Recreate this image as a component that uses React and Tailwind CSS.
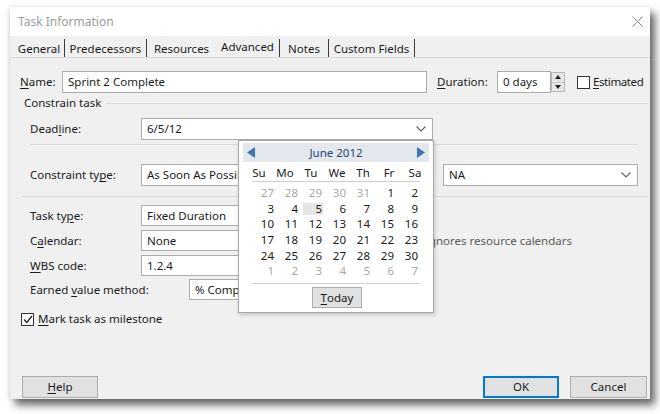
import React from "react";

const U = ({ children }) => <span className="underline underline-offset-[2px] decoration-[1px]">{children}</span>;

function Chevron() {
  return (
    <svg width="10" height="6" viewBox="0 0 10 6">
      <path d="M0.5 0.5 L5 5 L9.5 0.5" fill="none" stroke="#606060" strokeWidth="1.1" />
    </svg>
  );
}

function Field({ w, children, chevron }) {
  return (
    <div className={`${w} h-full bg-white border border-[#acacac] flex items-center justify-between pl-[5px] pr-[6px] overflow-hidden whitespace-nowrap`}>
      <span>{children}</span>
      {chevron ? <Chevron /> : null}
    </div>
  );
}

const weeks = [
  [["27", 0], ["28", 0], ["29", 0], ["30", 0], ["31", 0], ["1", 1], ["2", 1]],
  [["3", 1], ["4", 1], ["5", 2], ["6", 1], ["7", 1], ["8", 1], ["9", 1]],
  [["10", 1], ["11", 1], ["12", 1], ["13", 1], ["14", 1], ["15", 1], ["16", 1]],
  [["17", 1], ["18", 1], ["19", 1], ["20", 1], ["21", 1], ["22", 1], ["23", 1]],
  [["24", 1], ["25", 1], ["26", 1], ["27", 1], ["28", 1], ["29", 1], ["30", 1]],
  [["1", 0], ["2", 0], ["3", 0], ["4", 0], ["5", 0], ["6", 0], ["7", 0]],
];

function DayCell({ d, k }) {
  if (k === 0) return <div className="h-[15.7px] leading-[15.7px] text-right pr-[1px] text-[#a8a8a8]">{d}</div>;
  if (k === 2)
    return (
      <div className="h-[15.7px] flex justify-end">
        <div className="ml-[3px] w-[20px] h-[12px] mt-[2px] bg-[#e6e6e6] leading-[12px] text-right pr-[1px] text-[#1b1b1b]">{d}</div>
      </div>
    );
  return <div className="h-[15.7px] leading-[15.7px] text-right pr-[1px] text-[#1b1b1b]">{d}</div>;
}

function CalendarPopup() {
  return (
    <div className="absolute left-[228px] top-[133px] w-[196px] h-[173px] bg-white border border-[#a8a8a8] shadow-[1px_2px_4px_rgba(0,0,0,0.18)] flex flex-col">
      <div className="ml-[4px] mt-[2px] w-[186px] h-[19px] bg-[#e3e8ef] flex items-center justify-between px-[4px]">
        <svg width="8" height="11" viewBox="0 0 8 11">
          <path d="M8 0 L0 5.5 L8 11 Z" fill="#3a78b5" />
        </svg>
        <span className="text-[#27466e] text-[11.5px]">June 2012</span>
        <svg width="8" height="11" viewBox="0 0 8 11">
          <path d="M0 0 L8 5.5 L0 11 Z" fill="#3a78b5" />
        </svg>
      </div>
      <div className="ml-[7px] mt-[3px] grid grid-cols-[repeat(7,26px)] h-[15px] leading-[15px] text-[#1b1b1b]">
        <div className="text-center">Su</div>
        <div className="text-center">Mo</div>
        <div className="text-center">Tu</div>
        <div className="text-center">We</div>
        <div className="text-center">Th</div>
        <div className="text-center">Fr</div>
        <div className="text-center">Sa</div>
      </div>
      <div className="ml-[13px] mt-[1px] w-[168px] h-px bg-[#cfcfcf]" />
      <div className="ml-[12px] mt-[3px] grid grid-cols-[repeat(7,24px)]">
        {weeks.map((w, i) =>
          w.map(([d, k], j) => <DayCell key={i + "-" + j} d={d} k={k} />)
        )}
      </div>
      <div className="ml-[13px] mt-[4px] w-[168px] h-px bg-[#cfcfcf]" />
      <div className="mt-[3px] self-center w-[50px] h-[21px] bg-[#e1e1e1] border border-[#adadad] flex items-center justify-center ml-[2px]">
        <U>T</U>oday
      </div>
    </div>
  );
}

function Tab({ w, children, sel, sep }) {
  return (
    <>
      <div className={`${w} h-full flex items-end justify-center ${sel ? "pb-[2px]" : "pb-0"}`}>
        <span className="leading-[16px]">{children}</span>
      </div>
      {sep ? <div className="w-[1px] h-[18px] self-end bg-[#3a3a3a]" /> : null}
    </>
  );
}

export default function App() {
  return (
    <div className="w-[660px] h-[414px] bg-white overflow-hidden pl-[10px] pt-[7px] font-['Noto_Sans',sans-serif] text-[11.5px] text-[#1b1b1b]">
      <div className="relative w-[640px] h-[392px] bg-[#f0f0f0] flex flex-col shadow-[5px_6px_8px_rgba(0,0,0,0.6),-1px_0_4px_rgba(0,0,0,0.12)]">
        <div className="h-[29px] shrink-0 bg-white flex items-center justify-between pl-[8px] pr-[7px]">
          <span className="text-[12px] text-[#9c9c9c]">Task Information</span>
          <svg width="11" height="11" viewBox="0 0 11 11">
            <path d="M0.5 0.5 L10.5 10.5 M10.5 0.5 L0.5 10.5" stroke="#8e8e8e" strokeWidth="1" />
          </svg>
        </div>

        <div className="h-[22px] shrink-0 flex items-stretch pl-[4px] border-b border-[#dadada]">
          <Tab w="w-[50px]" sep>General</Tab>
          <Tab w="w-[81px]" sep>Predecessors</Tab>
          <Tab w="w-[69px]">Resources</Tab>
          <Tab w="w-[63px]" sel sep>Advanced</Tab>
          <Tab w="w-[48px]" sep>Notes</Tab>
          <Tab w="w-[85px]" sep>Custom Fields</Tab>
        </div>

        <div className="flex-1 flex flex-col pl-[10px]">
          <div className="mt-[13px] h-[22px] flex items-center">
            <span className="w-[42px]"><U>N</U>ame:</span>
            <Field w="w-[365px]">Sprint 2 Complete</Field>
            <span className="ml-[10px] w-[60px]"><U>D</U>uration:</span>
            <Field w="w-[54px]">0 days</Field>
            <div className="w-[14px] h-[20px] bg-[#e6e6e6] border border-[#b8b8b8] flex flex-col">
              <div className="flex-1 flex items-center justify-center border-b border-[#c8c8c8]">
                <svg width="6" height="4" viewBox="0 0 6 4"><path d="M0 4 L3 0 L6 4 Z" fill="#222" /></svg>
              </div>
              <div className="flex-1 flex items-center justify-center">
                <svg width="6" height="4" viewBox="0 0 6 4"><path d="M0 0 L3 4 L6 0 Z" fill="#222" /></svg>
              </div>
            </div>
            <div className="ml-[12px] w-[13px] h-[13px] bg-white border border-[#333]" />
            <span className="ml-[3px] tracking-[-0.4px]"><U>E</U>stimated</span>
          </div>

          <div className="mt-[3px] h-[14px] flex items-center">
            <span className="ml-[4px] leading-[14px]">Constrain task</span>
            <div className="flex-1 ml-[6px] mr-[2px] h-px bg-[#dcdcdc]" />
          </div>

          <div className="mt-[8px] h-[22px] flex items-center">
            <span className="ml-[10px] w-[111px]">Dead<U>l</U>ine:</span>
            <Field w="w-[292px]" chevron>6/5/12</Field>
          </div>

          <div className="mt-[4px] h-px ml-[10px] mr-[12px] bg-[#dcdcdc]" />

          <div className="mt-[19px] h-[22px] flex items-center">
            <span className="ml-[10px] w-[111px]">Constraint ty<U>p</U>e:</span>
            <Field w="w-[200px]" chevron>As Soon As Possible</Field>
            <div className="ml-auto mr-[12px] w-[195px] h-full">
              <Field w="w-full" chevron>NA</Field>
            </div>
          </div>

          <div className="mt-[10px] h-px ml-[2px] mr-[2px] bg-[#dcdcdc]" />

          <div className="mt-[8px] h-[21px] flex items-center">
            <span className="ml-[10px] w-[111px]">Task ty<U>p</U>e:</span>
            <Field w="w-[160px]" chevron>Fixed Duration</Field>
          </div>

          <div className="mt-[4px] h-[21px] flex items-center">
            <span className="ml-[10px] w-[111px]">C<U>a</U>lendar:</span>
            <Field w="w-[160px]" chevron>None</Field>
            <span className="ml-auto mr-[78px] text-[#5c5c5c]">gnores resource calendars</span>
          </div>

          <div className="mt-[4px] h-[21px] flex items-center">
            <span className="ml-[10px] w-[111px]"><U>W</U>BS code:</span>
            <Field w="w-[160px]">1.2.4</Field>
          </div>

          <div className="mt-[3px] h-[21px] flex items-center">
            <span className="ml-[10px] w-[159px]">Earned <U>v</U>alue method:</span>
            <Field w="w-[120px]" chevron>% Complete</Field>
          </div>

          <div className="mt-[12px] h-[14px] flex items-center">
            <div className="ml-[1px] w-[13px] h-[13px] bg-white border border-[#333] flex items-center justify-center">
              <svg width="10" height="9" viewBox="0 0 10 9">
                <path d="M1 4.5 L3.8 7.5 L9 1" fill="none" stroke="#222" strokeWidth="1.3" />
              </svg>
            </div>
            <span className="ml-[4px]"><U>M</U>ark task as milestone</span>
          </div>

          <div className="mt-auto mb-[1px] h-[22px] flex items-stretch">
            <div className="ml-[2px] w-[76px] bg-[#e1e1e1] border border-[#adadad] flex items-center justify-center">
              <U>H</U>elp
            </div>
            <div className="ml-auto w-[76px] bg-[#e1e1e1] border-2 border-[#0078d7] flex items-center justify-center">OK</div>
            <div className="ml-[11px] mr-[3px] w-[77px] bg-[#e1e1e1] border border-[#adadad] flex items-center justify-center">Cancel</div>
          </div>
        </div>

        <CalendarPopup />
      </div>
    </div>
  );
}
